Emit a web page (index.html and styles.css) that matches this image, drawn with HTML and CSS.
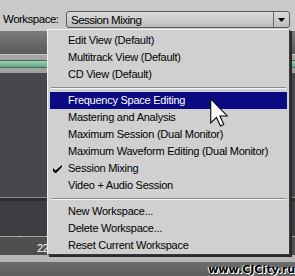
FILE: index.html
```html
<!DOCTYPE html>
<html lang="en">
<head>
    <meta charset="UTF-8">
    <meta name="viewport" content="width=device-width, initial-scale=1.0">
    <title>Workspace Menu</title>
    <link rel="stylesheet" href="styles.css">
</head>
<body>
    <div class="toolbar">
        <span class="label">Workspace:</span>
        <div class="combo">
            <span class="combo-text">Session Mixing</span>
            <span class="combo-btn">
                <svg width="7" height="4" viewBox="0 0 7 4"><path d="M0 0h7L3.5 4z" fill="#000"/></svg>
            </span>
        </div>
    </div>

    <div class="editor">
        <div class="band dark-top"></div>
        <div class="band light-line"></div>
        <div class="band gray"></div>
        <div class="band green"></div>
        <div class="band gray2"></div>
        <div class="band track"></div>
        <div class="band line2"></div>
        <div class="band shade"></div>
        <div class="band track2"></div>
        <div class="band ruler-line">
            <span class="tick t1"></span>
            <span class="tick t2"></span>
        </div>
        <div class="band ruler"><span class="ruler-num">22</span></div>
        <div class="band status"></div>
        <div class="band bottom"></div>
    </div>

    <!-- dropdown menu over the editor -->
    <div class="menu">
        <div class="item">Edit View (Default)</div>
        <div class="item">Multitrack View (Default)</div>
        <div class="item">CD View (Default)</div>
        <div class="sep"></div>
        <div class="item active">Frequency Space Editing</div>
        <div class="item">Mastering and Analysis</div>
        <div class="item">Maximum Session (Dual Monitor)</div>
        <div class="item">Maximum Waveform Editing (Dual Monitor)</div>
        <div class="item checked">
            <svg class="check" width="9" height="8" viewBox="0 0 9 8"><path d="M0 3v3l2 2h1l6-6V0L2.5 5.5z" fill="#000"/></svg>
            Session Mixing
        </div>
        <div class="item">Video + Audio Session</div>
        <div class="sep"></div>
        <div class="item">New Workspace...</div>
        <div class="item">Delete Workspace...</div>
        <div class="item">Reset Current Workspace</div>
    </div>

    <svg class="cursor" width="18" height="29" viewBox="0 0 12 19">
        <path d="M0.5 0.5V16.5L4.3 12.8L7 18.5L9.2 17.5L6.6 11.8H11.5Z" fill="#fff" stroke="#000" stroke-width="0.7"/>
    </svg>

    <div class="watermark">www.CJCity.ru</div>
</body>
</html>
```

FILE: styles.css
```css
body { margin: 0; width: 295px; height: 276px; overflow: hidden; position: relative; font-family: "Liberation Sans", Arial, sans-serif; font-size: 11px; letter-spacing: -0.25px; background: #626262; }

.toolbar { height: 31px; background: #c9c9c9; display: flex; align-items: flex-start; padding-top: 11px; box-sizing: border-box; }
.label { color: #000; width: 55px; margin-left: 3px; margin-top: 2px; font-size: 11.5px; letter-spacing: -0.5px; white-space: nowrap; }
.combo { margin-left: 8px; width: 224px; height: 17px; box-sizing: border-box; border: 1px solid #5a5a5a; border-radius: 3px; background: linear-gradient(#dcdcdc, #bcbcbc); display: flex; align-items: center; }
.combo-text { flex: 1; padding-left: 4px; font-size: 11.5px; letter-spacing: -0.5px; }
.combo-btn { width: 15px; height: 100%; border-left: 1px solid #6a6a6a; display: flex; align-items: center; justify-content: center; }

.editor { display: flex; flex-direction: column; }
.band { width: 100%; }
.dark-top { height: 23px; background: linear-gradient(#7c7c7c, #5b5b5b); }
.light-line { height: 1px; background: #c8c8c8; }
.gray { height: 5px; background: #a4a4a4; border-bottom: 1px solid #5c5c5c; }
.green { height: 6px; background: linear-gradient(#95d3b5, #62a687); border-bottom: 1px solid #4e6a5c; }
.gray2 { height: 5px; background: #a2a2a2; }
.track { height: 124px; background: #47484c; }
.line2 { height: 1px; background: #8e8e8e; }
.shade { height: 3px; background: #2c2d31; }
.track2 { height: 35px; background: #3d3e42; }
.ruler-line { height: 1px; background: #a0a0a0; position: relative; }
.tick { position: absolute; top: 0; width: 1px; height: 3px; background: #fff; }
.t1 { left: 20px; }
.t2 { left: 46px; }
.ruler { height: 18px; background: #4f4f4f; position: relative; }
.ruler-num { position: absolute; left: 37px; top: 5px; color: #fff; font-size: 11px; }
.status { height: 7px; background: #b7b7b7; }
.bottom { height: 14px; background: linear-gradient(#6c6c6c, #5e5e5e); }

.menu { position: absolute; left: 47px; top: 29px; width: 243px; height: 226px; box-sizing: border-box; padding: 2px; background: #d0d0d0; border: 1px solid; border-color: #f2f2f2 #3c3c3c #3c3c3c #f2f2f2; box-shadow: 2px 2px 0 #2a2a2a; }
.item { height: 17px; line-height: 17px; padding-left: 18px; color: #000; white-space: nowrap; position: relative; }
.item.active { background: #0a0a82; color: #fff; }
.check { position: absolute; left: 3px; top: 5px; }
.sep { height: 9px; position: relative; }
.sep::after { content: ""; position: absolute; left: 1px; right: 1px; top: 4px; height: 1px; background: #8c8c8c; border-bottom: 1px solid #f4f4f4; }

.cursor { position: absolute; left: 210px; top: 98px; }

.watermark { position: absolute; right: 0; top: 263px; line-height: 13px; font-family: "DejaVu Sans", sans-serif; font-weight: bold; font-size: 11px; letter-spacing: 0; color: #000; text-shadow: 1px 1px 0 #fff, -1px 0 0 #fff; }
```
